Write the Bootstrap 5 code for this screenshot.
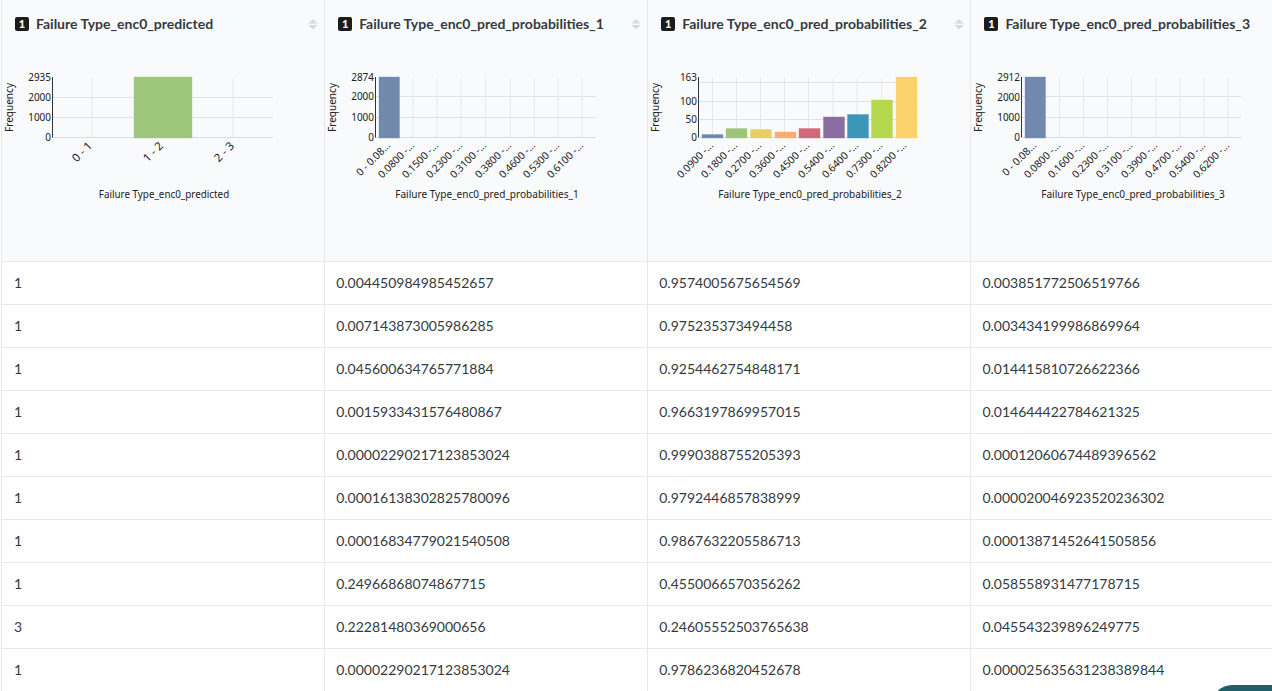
<!doctype html>
<html lang="en"><head><meta charset="utf-8"><title>Table</title>
<link href="https://cdn.jsdelivr.net/npm/bootstrap@5.3.0/dist/css/bootstrap.min.css" rel="stylesheet">
<style>
html,body{height:691px;overflow:hidden;background:#fff}
body{font-family:"Lato","Liberation Sans",sans-serif;font-size:14px;color:#343a40}
.data-wrap{width:1293px;margin-left:1px}
.data-grid{table-layout:fixed;width:1293px;margin:0;border-collapse:collapse}
.data-grid th,.data-grid td{border:0;border-left:1px solid #e6e8eb;border-bottom:1px solid #e6e8eb;padding:0 11px;box-shadow:none}
.data-grid th{height:261px;background:#f8fafc;vertical-align:top;padding:0;position:relative;font-weight:700;color:#343a40}
.data-grid td{height:43px;vertical-align:middle;color:#343a40;line-height:20px}
.data-grid td:first-child{padding-left:12px}
.col-title{height:48px;padding:17px 0 0 13px;gap:7px;font-size:14px;line-height:14px;white-space:nowrap}
.num-tag{width:14px;height:14px;background:#1c1c1c;color:#fff;border-radius:2px;font-size:11px;line-height:14px;text-align:center;font-weight:900;flex:none}
.sort-mark{position:absolute;left:306px;top:18px}
.mini-chart{display:block;width:322px;height:170px}
.mini-chart text{font-family:"Noto Sans","Open Sans",sans-serif;font-size:10px;fill:#222;font-weight:400}
.help-pill{position:absolute;left:1212px;top:685px;width:100px;height:40px;border-radius:20px;background:#1f5f66}
</style></head><body>
<div class="data-wrap">
<table class="table data-grid"><colgroup><col><col><col><col></colgroup>
<thead><tr id="heads"></tr></thead>
<tbody>
<tr><td>1</td><td>0.004450984985452657</td><td>0.9574005675654569</td><td>0.003851772506519766</td></tr>
<tr><td>1</td><td>0.007143873005986285</td><td>0.975235373494458</td><td>0.003434199986869964</td></tr>
<tr><td>1</td><td>0.045600634765771884</td><td>0.9254462754848171</td><td>0.014415810726622366</td></tr>
<tr><td>1</td><td>0.0015933431576480867</td><td>0.9663197869957015</td><td>0.014644422784621325</td></tr>
<tr><td>1</td><td>0.00002290217123853024</td><td>0.9990388755205393</td><td>0.00012060674489396562</td></tr>
<tr><td>1</td><td>0.00016138302825780096</td><td>0.9792446857838999</td><td>0.000020046923520236302</td></tr>
<tr><td>1</td><td>0.00016834779021540508</td><td>0.9867632205586713</td><td>0.00013871452641505856</td></tr>
<tr><td>1</td><td>0.24966868074867715</td><td>0.4550066570356262</td><td>0.058558931477178715</td></tr>
<tr><td>3</td><td>0.22281480369000656</td><td>0.24605552503765638</td><td>0.045543239896249775</td></tr>
<tr><td>1</td><td>0.00002290217123853024</td><td>0.9786236820452678</td><td>0.000025635631238389844</td></tr>
</tbody></table></div>
<div class="help-pill"></div>
<script>
const C=['#7189ad','#9dc67a','#e8cf5f','#f7ad74','#d2687b','#8b6e9f','#3c97b6','#b5d84f','#fbd26a'];
const D=[
{name:'Failure Type_enc0_predicted',fs:11.5,ly:146.5,ax:51.5,gx:272,xc:163,yl:[['2935',77],['2000',97],['1000',117],['0',137]],hg:[97.5,117.5],vg:[91,232],
 bars:[[133,191,77,1]],labels:['0 - 1','1 - 2','2 - 3'],lx:[92,163,234]},
{name:'Failure Type_enc0_pred_probabilities_1',ax:51.5,gx:272,xc:163,yl:[['2874',77],['2000',96],['1000',117],['0',137]],hg:[96.5,117.5],vg:[89,113,137,161.5,186.5,210.5,234,258],
 bars:[[55,75.5,77,0]],labels:['0 - 0.08...','0.0800 -...','0.1500 -...','0.2300 -...','0.3100 -...','0.3800 -...','0.4600 -...','0.5300 -...','0.6100 -...'],lx:[67,91,115,139,163,188,212,236,260]},
{name:'Failure Type_enc0_pred_probabilities_2',ax:51.5,gx:271,xc:163,yl:[['163',77],['100',101],['50',119.5],['0',137]],hg:[82.5,101.5,119.5],vg:[65.5,89.5,113.5,137.5,161.5,186,210,234.5,258.5],
 bars:[[55,76,134.5,0],[79,100,128.5,1],[103.5,124.5,129.5,2],[128,149,132,3],[152,173,128.5,4],[176.5,197.5,117,5],[200.5,221.5,114.5,6],[224.5,245.5,100,7],[249,270,77,8]],labels:['0.0900 -...','0.1800 -...','0.2700 -...','0.3600 -...','0.4500 -...','0.5400 -...','0.6400 -...','0.7300 -...','0.8200 -...'],lx:[67,91,115,139,163,188,212,236,260]},
{name:'Failure Type_enc0_pred_probabilities_3',ax:51.5,gx:271.5,xc:163,yl:[['2912',77],['2000',97],['1000',117],['0',137]],hg:[96.5,117.5],vg:[89.5,113.5,137.5,161.5,186,210,234,258],
 bars:[[55,75.5,77,0]],labels:['0 - 0.08...','0.0800 -...','0.1600 -...','0.2300 -...','0.3100 -...','0.3900 -...','0.4700 -...','0.5400 -...','0.6200 -...'],lx:[67,91,115,139,163,188,212,236,260]}
];
document.getElementById('heads').innerHTML=D.map(d=>{
 let s='<g transform="translate(-1 0)">';
 d.hg.forEach(y=>s+=`<line x1="${d.ax}" x2="${d.gx}" y1="${y}" y2="${y}" stroke="#e2e2e2"/>`);
 d.vg.forEach(x=>s+=`<line x1="${x}" x2="${x}" y1="78" y2="137" stroke="#e8e8e8"/>`);
 s+=`<line x1="${d.ax}" x2="${d.gx}" y1="137.5" y2="137.5" stroke="#dcdcdc"/>`;
 d.bars.forEach(b=>s+=`<rect x="${b[0]}" y="${b[2]}" width="${b[1]-b[0]}" height="${138-b[2]}" fill="${C[b[3]]}" stroke="${C[b[3]]}" stroke-opacity=".35"/>`);
 s+=`<line x1="${d.ax}" x2="${d.ax}" y1="77" y2="137.5" stroke="#333"/>`;
 d.yl.forEach(t=>s+=`<text x="50" y="${t[1]+3.5}" text-anchor="end" textLength="${t[0].length*5.7}" lengthAdjust="spacingAndGlyphs">${t[0]}</text>`);
 d.labels.forEach((l,i)=>s+=`<text transform="translate(${d.lx[i]},${d.ly||146}) rotate(-45)" text-anchor="end" font-size="${d.fs||10.3}" style="font-size:${d.fs||10.3}px">${l}</text>`);
 s+=`<text x="${d.xc}" y="197.5" text-anchor="middle" textLength="${d.name.length*4.83}" lengthAdjust="spacingAndGlyphs">${d.name}</text></g>`;
 s+=`<text transform="translate(11,107.5) rotate(-90)" text-anchor="middle" textLength="49" lengthAdjust="spacingAndGlyphs">Frequency</text>`;
 return `<th scope="col"><div class="d-flex align-items-start col-title"><span class="num-tag">1</span><span>${d.name}</span></div>
 <svg class="sort-mark" width="10" height="12" viewBox="0 0 10 12"><path d="M5 1 9.5 5.5H.5ZM5 11.5 .5 7H9.5Z" fill="#d6d9dd"/></svg>
 <svg class="mini-chart" viewBox="0 48 322 170">${s}</svg></th>`;
}).join('');
</script>
<script src="https://cdn.jsdelivr.net/npm/bootstrap@5.3.0/dist/js/bootstrap.bundle.min.js"></script>
</body></html>
